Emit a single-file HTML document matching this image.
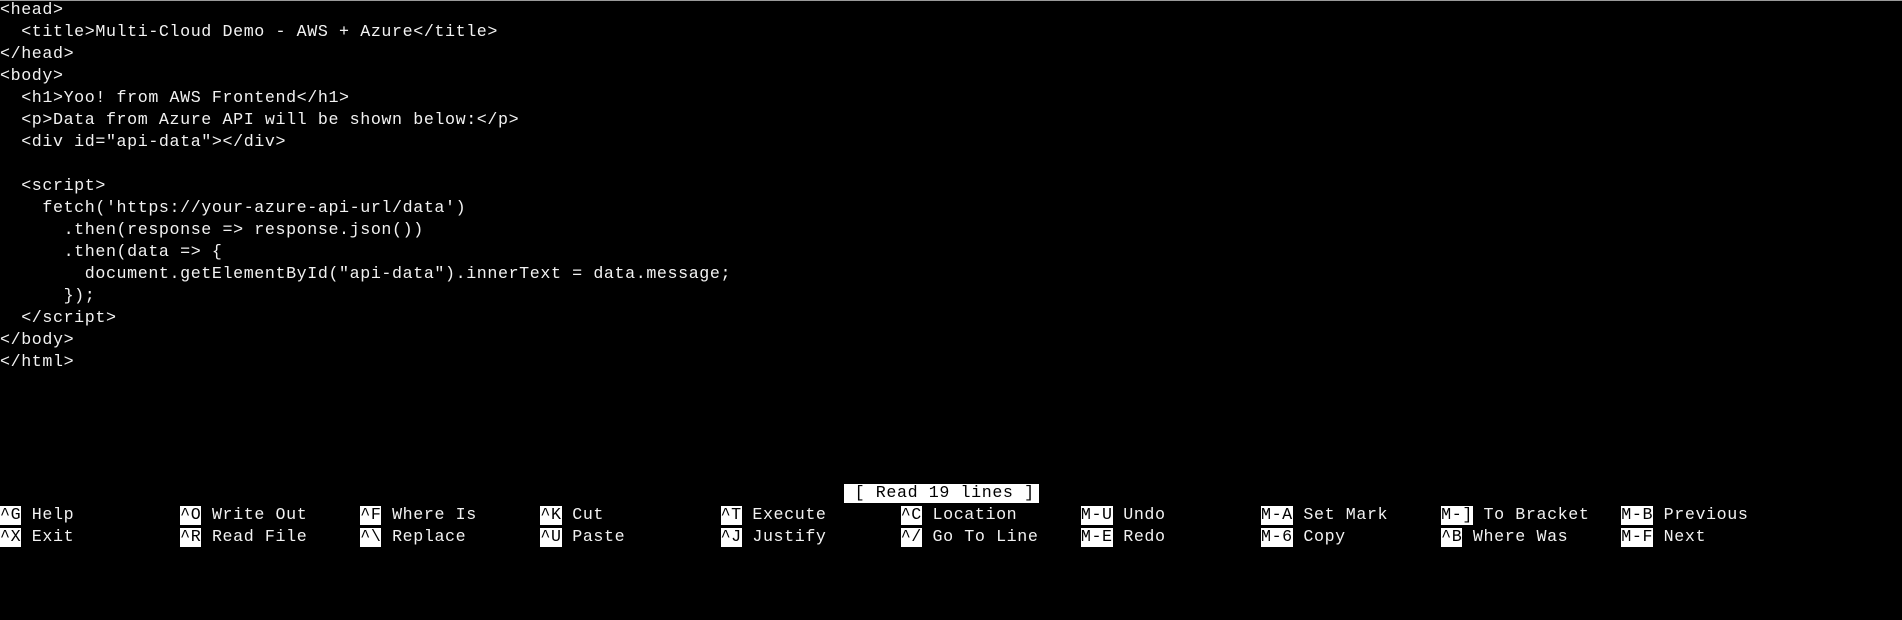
<!DOCTYPE html>
<html><head><meta charset="utf-8"><style>
html,body{margin:0;padding:0;background:#000;width:1902px;height:620px;overflow:hidden}
body{border-top:1px solid #9a9a9a;box-sizing:border-box}
.r{position:absolute;left:0;height:22px;line-height:22px;white-space:pre;font-family:"Liberation Mono",monospace;font-size:16.67px;letter-spacing:0.6px;color:#f2f2f2}
.k{background:#fff;color:#000}
</style></head><body>
<div class="r" style="top:0">&lt;head&gt;</div>
<div class="r" style="top:22px">  &lt;title&gt;Multi-Cloud Demo - AWS + Azure&lt;/title&gt;</div>
<div class="r" style="top:44px">&lt;/head&gt;</div>
<div class="r" style="top:66px">&lt;body&gt;</div>
<div class="r" style="top:88px">  &lt;h1&gt;Yoo! from AWS Frontend&lt;/h1&gt;</div>
<div class="r" style="top:110px">  &lt;p&gt;Data from Azure API will be shown below:&lt;/p&gt;</div>
<div class="r" style="top:132px">  &lt;div id="api-data"&gt;&lt;/div&gt;</div>
<div class="r" style="top:176px">  &lt;script&gt;</div>
<div class="r" style="top:198px">    fetch('https://your-azure-api-url/data')</div>
<div class="r" style="top:220px">      .then(response =&gt; response.json())</div>
<div class="r" style="top:242px">      .then(data =&gt; {</div>
<div class="r" style="top:264px">        document.getElementById("api-data").innerText = data.message;</div>
<div class="r" style="top:286px">      });</div>
<div class="r" style="top:308px">  &lt;/script&gt;</div>
<div class="r" style="top:330px">&lt;/body&gt;</div>
<div class="r" style="top:352px">&lt;/html&gt;</div>
<div class="r" style="top:483px;left:844px"><span class="k" style="padding-right:4px"> [ Read 19 lines ]</span></div>
<div class="r" style="top:505px"><span class="k">^G</span> Help          <span class="k">^O</span> Write Out     <span class="k">^F</span> Where Is      <span class="k">^K</span> Cut           <span class="k">^T</span> Execute       <span class="k">^C</span> Location      <span class="k">M-U</span> Undo         <span class="k">M-A</span> Set Mark     <span class="k">M-]</span> To Bracket   <span class="k">M-B</span> Previous</div>
<div class="r" style="top:527px"><span class="k">^X</span> Exit          <span class="k">^R</span> Read File     <span class="k">^\</span> Replace       <span class="k">^U</span> Paste         <span class="k">^J</span> Justify       <span class="k">^/</span> Go To Line    <span class="k">M-E</span> Redo         <span class="k">M-6</span> Copy         <span class="k">^B</span> Where Was     <span class="k">M-F</span> Next</div>
</body></html>
